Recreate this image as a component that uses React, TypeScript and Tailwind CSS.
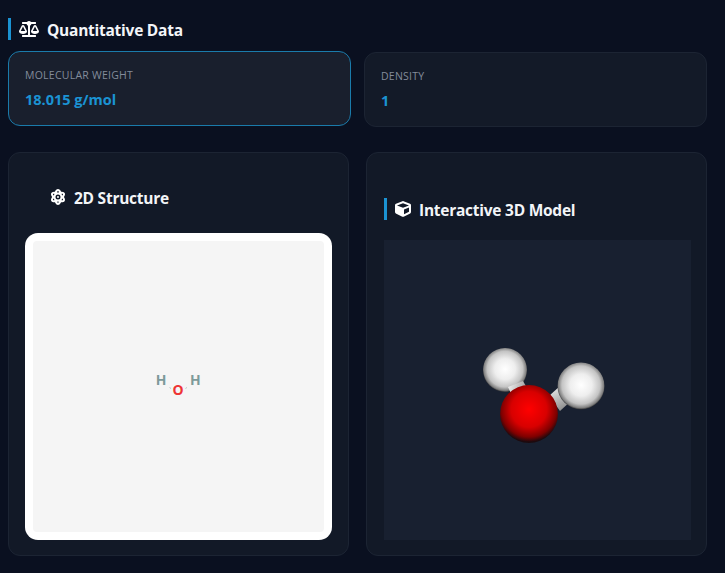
import React from "react";
import { FaAtom, FaBalanceScale, FaCube } from "react-icons/fa";

const font = { fontFamily: '"Open Sans", "Noto Sans", sans-serif' };

function Stat({ label, value, active }: { label: string; value: string; active?: boolean }) {
  return (
    <div
      className={
        active
          ? "h-[75px] -translate-y-px rounded-xl border border-[#1a7bab] bg-[#191f2d] px-[16px] pt-[15px]"
          : "h-[75px] rounded-xl border border-[#1c2433] bg-[#131a28] px-[16px] pt-[15px]"
      }>
      <div className="text-[10.5px] leading-[16px] tracking-[0.25px] text-[#838c9b]">{label}</div>
      <div className="mt-[7px] text-[14.5px] leading-[20px] font-bold text-[#1b93d3]">{value}</div>
    </div>
  );
}

function Structure2D() {
  return (
    <svg viewBox="0 0 292 291" className="h-full w-full">
      <text x="128.500" y="144.500" textAnchor="middle" fontSize="14" fontWeight="700" fill="#7d9a9a" fontFamily="Open Sans">H</text>
      <text x="163" y="144.500" textAnchor="middle" fontSize="14" fontWeight="700" fill="#7d9a9a" fontFamily="Open Sans">H</text>
      <text x="145.500" y="154" textAnchor="middle" fontSize="14" fontWeight="700" fill="#ee3434" fontFamily="Open Sans">O</text>
      <path d="M137 146.500l1.500 1M153 147.500l1.500-1" stroke="#b9c4c4" strokeWidth="1" />
    </svg>
  );
}

function Model3D() {
  return (
    <svg viewBox="0 0 307 300" className="h-full w-full">
      <defs>
        <radialGradient id="hydrogen" cx="50%" cy="48%" r="52%">
          <stop offset="0%" stopColor="#ffffff" />
          <stop offset="45%" stopColor="#eeeeee" />
          <stop offset="78%" stopColor="#c4c4c4" />
          <stop offset="93%" stopColor="#808080" />
          <stop offset="100%" stopColor="#2c2d30" />
        </radialGradient>
        <radialGradient id="oxygen" cx="50%" cy="42%" r="56%">
          <stop offset="0%" stopColor="#ff0000" />
          <stop offset="55%" stopColor="#d80000" />
          <stop offset="85%" stopColor="#800000" />
          <stop offset="100%" stopColor="#1c0a0e" />
        </radialGradient>
        <linearGradient id="bondA" x1="0" y1="0" x2="1" y2="0.300">
          <stop offset="0%" stopColor="#f5f5f5" />
          <stop offset="100%" stopColor="#8d8d8d" />
        </linearGradient>
        <linearGradient id="bondB" x1="0" y1="0" x2="0.500" y2="1">
          <stop offset="0%" stopColor="#f5f5f5" />
          <stop offset="100%" stopColor="#8d8d8d" />
        </linearGradient>
      </defs>
      <circle cx="121" cy="130" r="22" fill="url(#hydrogen)" />
      <path d="M124 147l15-6 8 14-16 7z" fill="url(#bondA)" />
      <path d="M165 156l11-10 12 14-12 11z" fill="url(#bondB)" />
      <circle cx="197" cy="146" r="23.500" fill="url(#hydrogen)" />
      <circle cx="145" cy="174" r="29" fill="url(#oxygen)" />
    </svg>
  );
}

export default function App() {
  return (
    <div className="h-[573px] w-[725px] overflow-hidden bg-[#0a1020] pt-[18px] pr-[18px] pl-[8px]" style={font}>
      <div className="flex h-[22px] items-center border-l-[3.5px] border-[#1b93d3] pl-[8px]">
        <FaBalanceScale className="mr-[8px] text-[20px] text-white" />
        <h2 className="mt-[2px] text-[15.5px] leading-[22px] font-bold tracking-[-0.25px] text-[#f3f5f8]">Quantitative Data</h2>
      </div>

      <div className="mt-[12px] grid grid-cols-2 gap-[13px]">
        <Stat label="MOLECULAR WEIGHT" value="18.015 g/mol" active />
        <Stat label="DENSITY" value="1" />
      </div>

      <div className="mt-[25px] grid grid-cols-2 gap-[17px]">
        <section className="h-[404px] rounded-xl border border-[#1c2433] bg-[#121927] px-[16px] pt-[33px]">
          <div className="flex h-[22px] items-center pl-[25px]">
            <FaAtom className="mr-[8px] text-[16px] text-white" />
            <h3 className="mt-[2px] text-[15.5px] leading-[22px] font-bold tracking-[-0.25px] text-[#f3f5f8]">2D Structure</h3>
          </div>
          <div className="mt-[25px] h-[307px] rounded-[13px] bg-white p-[8px]">
            <div className="h-full rounded-[4px] bg-[#f5f5f5]">
              <Structure2D />
            </div>
          </div>
        </section>

        <section className="h-[404px] rounded-xl border border-[#1c2433] bg-[#121927] pt-[45px] pr-[15px] pl-[17px]">
          <div className="flex h-[22px] items-center border-l-[3.5px] border-[#1b93d3] pl-[8px]">
            <FaCube className="mr-[8px] text-[16px] text-white" />
            <h3 className="mt-[2px] text-[15.5px] leading-[22px] font-bold tracking-[-0.25px] text-[#f3f5f8]">Interactive 3D Model</h3>
          </div>
          <div className="mt-[20px] h-[300px] bg-[#182030]">
            <Model3D />
          </div>
        </section>
      </div>
    </div>
  );
}
